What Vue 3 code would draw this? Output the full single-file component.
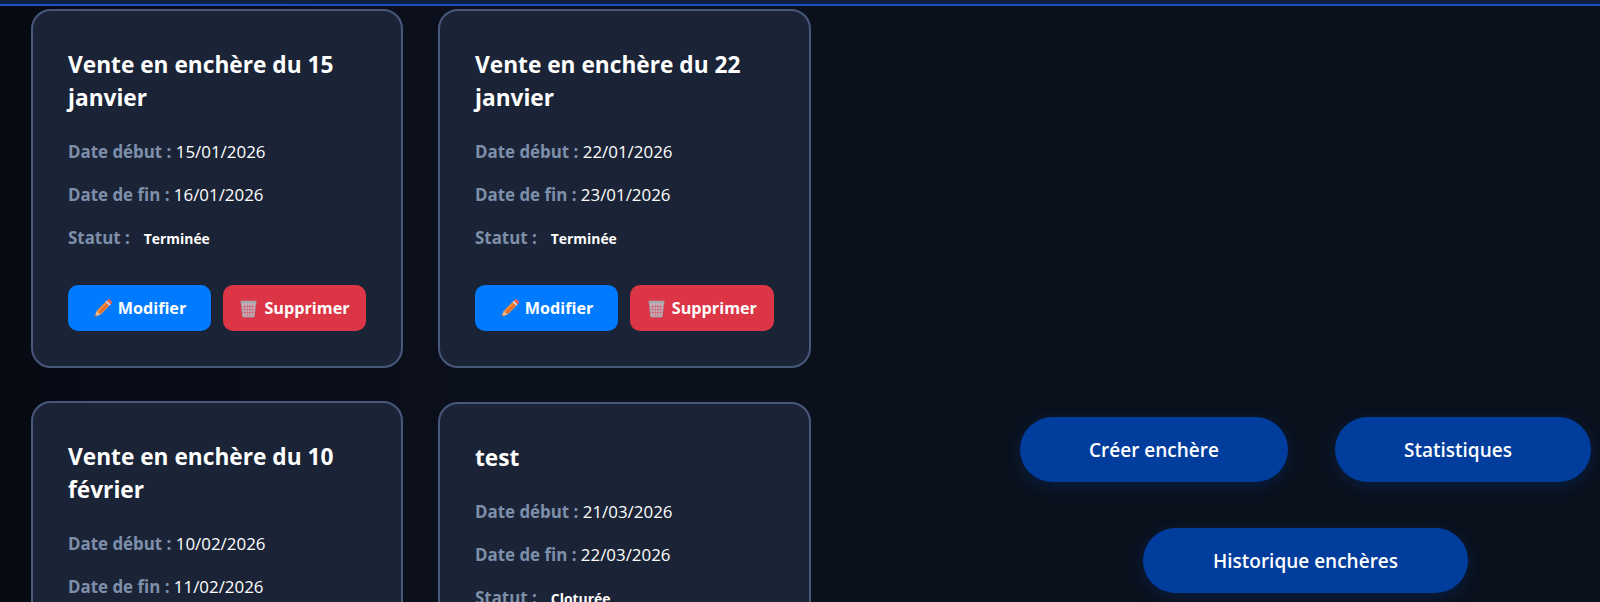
<script setup>
const cards = [
  { title: 'Vente en enchère du 15 janvier', start: '15/01/2026', end: '16/01/2026', status: 'Terminée' },
  { title: 'Vente en enchère du 22 janvier', start: '22/01/2026', end: '23/01/2026', status: 'Terminée' },
  { title: 'Vente en enchère du 10 février', start: '10/02/2026', end: '11/02/2026', status: 'Terminée' },
  { title: 'test', start: '21/03/2026', end: '22/03/2026', status: 'Cloturée', shifted: true },
]
</script>

<template>
  <div class="page">
    <div class="topbar"></div>
    <main class="main">
      <section class="grid">
        <article v-for="c in cards" :key="c.title" class="card" :class="{ shifted: c.shifted }">
          <h3 class="title">{{ c.title }}</h3>
          <p class="row"><strong>Date début :</strong> {{ c.start }}</p>
          <p class="row"><strong>Date de fin :</strong> {{ c.end }}</p>
          <p class="row"><strong>Statut :</strong><span class="badge">{{ c.status }}</span></p>
          <div class="btns">
            <button class="btn blue">
              <svg class="ico" viewBox="1.4 0.4 16 16">
                <path d="M4.6 10.2 12 2.8l3.2 3.2-7.4 7.4z" fill="#f4893b" />
                <path d="M6 11.8 13.4 4.4l1 1-7.4 7.4z" fill="#e0682b" />
                <path d="M12.9 1.9l.9-.9a1.4 1.4 0 0 1 2 0l1.2 1.2a1.4 1.4 0 0 1 0 2l-.9.9z" fill="#ee5f4c" />
                <path d="M12 2.8l.9-.9 3.2 3.2-.9.9z" fill="#e9dcd8" />
                <path d="M4.6 10.2 2.4 15.6 7.8 13.4z" fill="#f2b67f" />
                <path d="M3.2 13.6 2.4 15.6 4.4 14.8z" fill="#6b4d45" />
              </svg>
              Modifier
            </button>
            <button class="btn red">
              <svg class="ico" viewBox="0 0 18 18">
                <path d="M2.2 3.6h13.6L14.3 17H3.7z" fill="#c3b4be" />
                <path d="M1.5 1.6h15v2.4h-15z" fill="#a5a4ac" />
                <path d="M5 5l.7 11M7.7 5l.3 11M10.3 5l-.3 11M13 5l-.7 11M3 7.2h12M3.2 10h11.6M3.5 12.8h11" stroke="#cf6a78" stroke-width=".8" fill="none" />
                <path d="M2.2 4 3.7 17h10.6L15.8 4" stroke="#9d9ca6" stroke-width=".8" fill="none" />
              </svg>
              Supprimer
            </button>
          </div>
        </article>
      </section>
      <aside class="actions">
        <button class="action w1">Créer enchère</button>
        <button class="action w2">Statistiques</button>
        <button class="action w3">Historique enchères</button>
      </aside>
    </main>
  </div>
</template>

<style>
html, body { margin: 0; background: #0a111c; }
</style>

<style scoped>
.page {
  height: 602px;
  overflow: hidden;
  font-family: "Open Sans", "Noto Sans", sans-serif;
  background: linear-gradient(90deg, #060a13 0%, #0a0f1b 25%, #0a111d 55%, #0a111d 100%);
  color: #fff;
}
.topbar {
  height: 4px;
  background: #10213f;
  border-bottom: 2px solid #1a52c4;
}
.main {
  display: flex;
  justify-content: space-between;
  padding: 3px 9px 0 31px;
}
.grid {
  display: grid;
  grid-template-columns: 372px 372.5px;
  column-gap: 35px;
  row-gap: 33px;
  align-items: start;
  align-self: flex-start;
}
.card {
  box-sizing: border-box;
  height: 359px;
  padding: 37px 35px 36px;
  background: #1b2436;
  border: 2px solid #47597a;
  border-radius: 20px;
}
.card.shifted { margin-top: 1px; }
.title {
  margin: 0 0 25px;
  font-size: 22.7px;
  line-height: 33px;
  font-weight: 700;
}
.row {
  margin: 0 0 18px;
  font-size: 16.9px;
  line-height: 25px;
  color: #fff;
}
.row strong { color: #7e8fab; font-weight: 700; }
.badge {
  margin-left: 14px;
  font-size: 13.9px;
  font-weight: 700;
}
.btns {
  display: flex;
  gap: 12px;
  margin-top: 34px;
}
.btn {
  flex: 1;
  height: 46px;
  display: flex;
  align-items: center;
  justify-content: center;
  gap: 6px;
  padding: 0;
  border: 0;
  border-radius: 10px;
  color: #fff;
  font: 700 16.2px "Open Sans", sans-serif;
}
.blue { background: #007bff; }
.red { background: #dc3545; }
.ico { width: 19px; height: 19px; flex: none; }
.actions {
  display: flex;
  flex-wrap: wrap;
  justify-content: center;
  gap: 46px 47px;
  width: 571px;
  padding-top: 408px;
  align-self: flex-start;
}
.action {
  height: 65px;
  border: 0;
  border-radius: 33px;
  background: #003d9c;
  color: #fff;
  font: 600 19px "Open Sans", sans-serif;
  box-shadow: 0 4px 15px rgba(0, 70, 180, .25);
}
.w1 { width: 268px; }
.w2 { width: 256px; padding: 0 10px 0 0; }
.w3 { width: 325px; }
</style>
